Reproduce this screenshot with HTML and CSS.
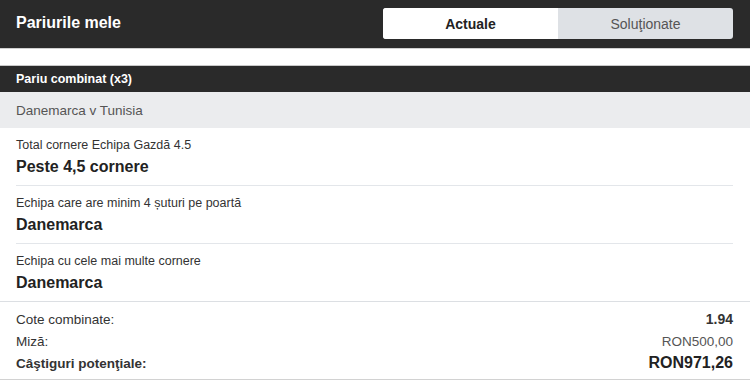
FILE: index.html
```html
<!DOCTYPE html>
<html lang="ro">
<head>
<meta charset="utf-8">
<link rel="stylesheet" href="styles.css">
</head>
<body>
<header class="top">
  <h1 class="title">Pariurile mele</h1>
  <div class="tabs">
    <div class="tab active">Actuale</div>
    <div class="tab">Soluţionate</div>
  </div>
</header>
<div class="spacer"></div>
<section class="bet">
  <div class="bet-head">Pariu combinat (x3)</div>
  <div class="event">Danemarca v Tunisia</div>
  <div class="sel">
    <div class="sel-inner">
      <div class="market">Total cornere Echipa Gazdă 4.5</div>
      <div class="pick">Peste 4,5 cornere</div>
    </div>
  </div>
  <div class="sel">
    <div class="sel-inner">
      <div class="market">Echipa care are minim 4 șuturi pe poartă</div>
      <div class="pick">Danemarca</div>
    </div>
  </div>
  <div class="sel last">
    <div class="sel-inner">
      <div class="market">Echipa cu cele mai multe cornere</div>
      <div class="pick">Danemarca</div>
    </div>
  </div>
  <div class="summary">
    <div class="srow"><span>Cote combinate:</span><span class="odds">1.94</span></div>
    <div class="srow"><span>Miză:</span><span class="stake">RON500,00</span></div>
    <div class="srow strong"><span>Câştiguri potenţiale:</span><span class="win">RON971,26</span></div>
  </div>
</section>
</body>
</html>
```
FILE: styles.css
```css
* { box-sizing: border-box; }
body {
  margin: 0;
  font-family: "Liberation Sans", Arial, sans-serif;
  background: #fff;
  color: #333;
}
.top {
  height: 49px;
  background: #2a2a2a;
  border-bottom: 1px solid #cfcfcf;
  display: flex;
  align-items: flex-start;
  justify-content: space-between;
  padding: 0 17px 0 16px;
}
.title {
  margin: 0;
  font-size: 16px;
  font-weight: bold;
  color: #fff;
  line-height: 18px;
  padding-top: 14px;
}
.tabs {
  margin-top: 8px;
  width: 350px;
  height: 31px;
  display: flex;
  border-radius: 3px;
  overflow: hidden;
  background: #dee1e5;
}
.tab {
  flex: 1;
  display: flex;
  align-items: center;
  justify-content: center;
  font-size: 14px;
  color: #555;
  padding-top: 1px;
}
.tab.active {
  background: #fff;
  color: #222;
  font-weight: bold;
}
.spacer {
  height: 17px;
  border-bottom: 1px solid #c8c8c8;
}
.bet-head {
  height: 26px;
  background: #2a2a2a;
  color: #fff;
  font-size: 12.5px;
  font-weight: bold;
  display: flex;
  align-items: center;
  padding: 0 16px;
}
.event {
  height: 36px;
  background: #ebecee;
  color: #555;
  font-size: 13.5px;
  display: flex;
  align-items: center;
  padding: 0 16px;
}
.sel {
  padding: 0 17px 0 16px;
}
.sel-inner {
  height: 58px;
  border-bottom: 1px solid #e3e6ea;
  padding-top: 10px;
}
.sel.last { padding: 0; }
.sel.last .sel-inner { padding: 10px 16px 0; border-bottom-color: #dcdfe3; }
.market {
  font-size: 12.5px;
  color: #333;
  line-height: 14px;
}
.pick {
  margin-top: 6px;
  font-size: 16px;
  font-weight: bold;
  color: #222;
  line-height: 18px;
}
.summary {
  padding: 6px 17px 5px 16px;
  border-bottom: 1px solid #d2d2d2;
}
.srow {
  display: flex;
  justify-content: space-between;
  align-items: center;
  height: 22px;
  font-size: 13.5px;
  color: #333;
}
.srow.strong { font-weight: bold; }
.odds { font-weight: bold; font-size: 14px; color: #333; }
.stake { color: #555; font-size: 13.5px; }
.win { font-size: 16px; color: #222; }
```
